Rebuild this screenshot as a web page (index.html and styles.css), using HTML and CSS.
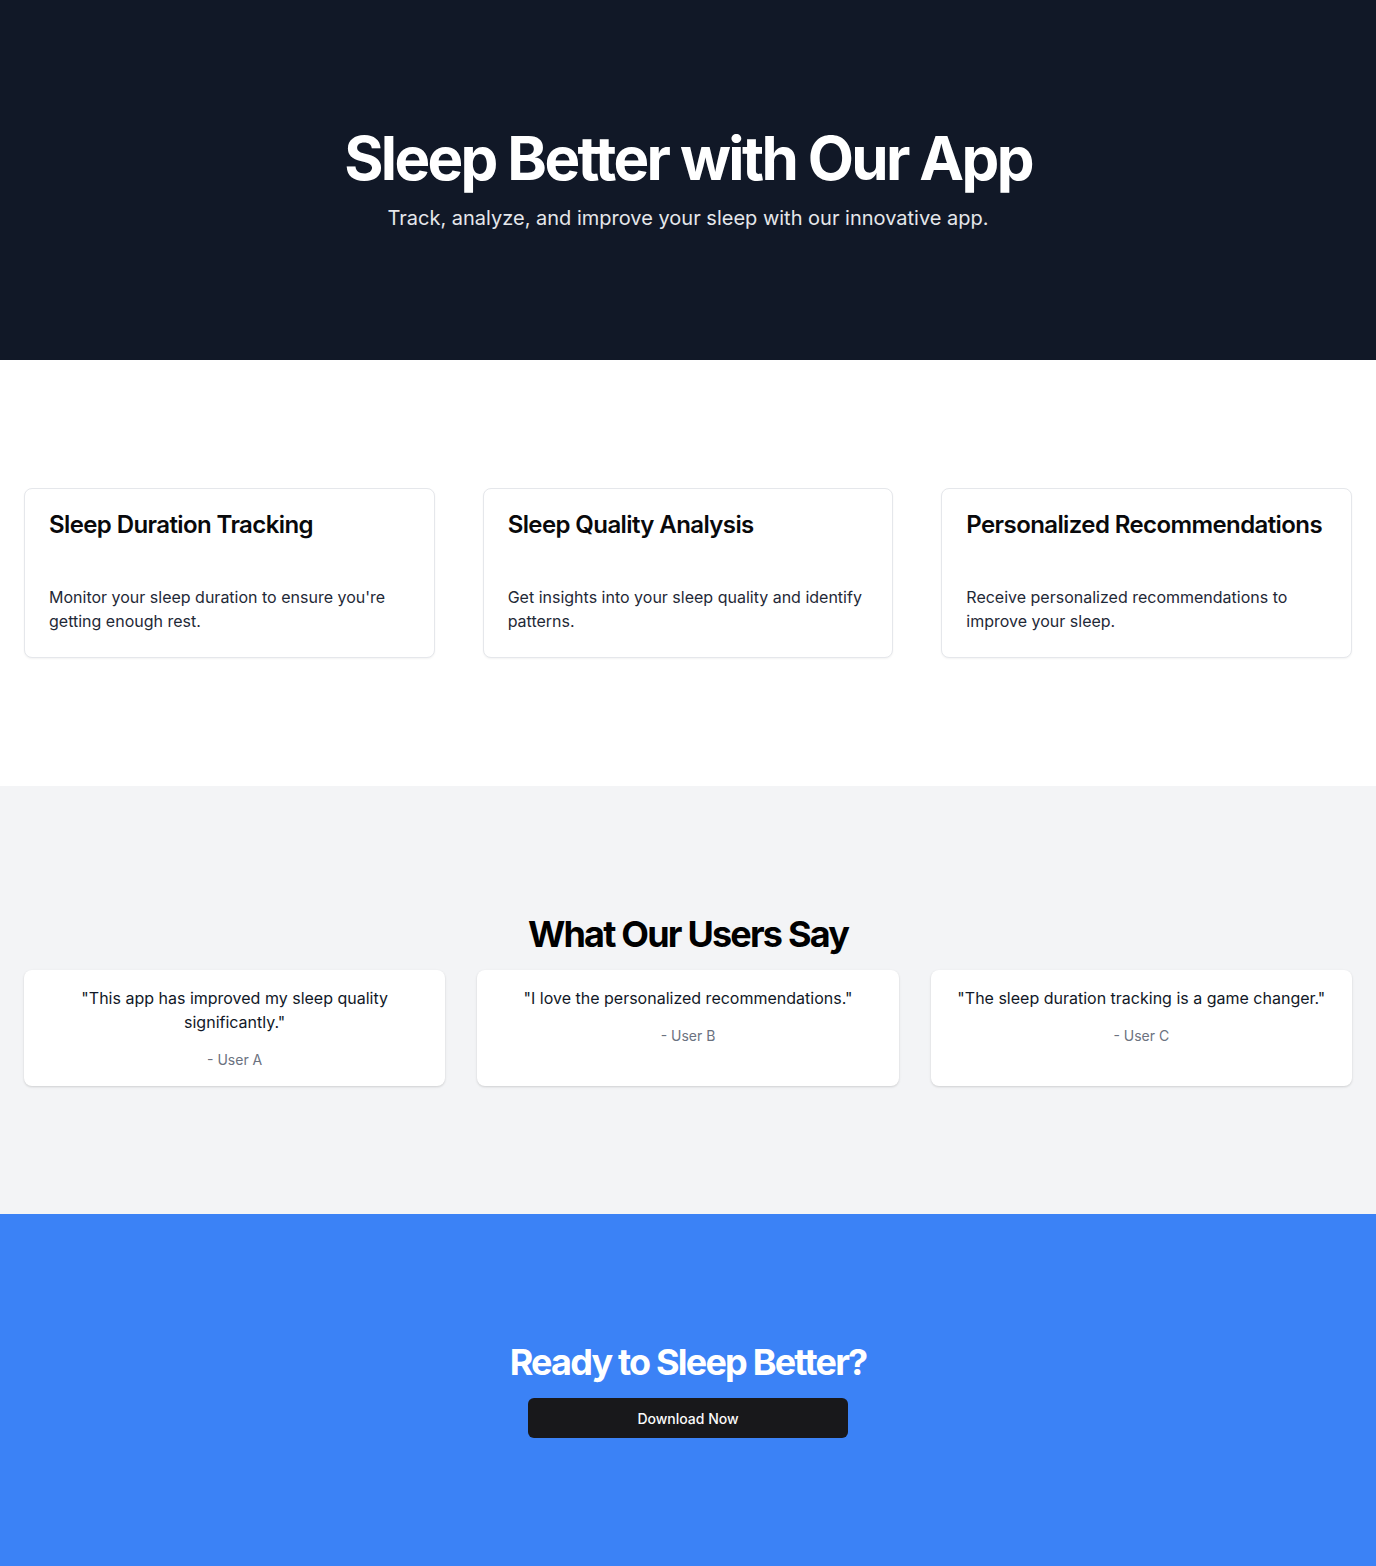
FILE: index.html
```html
<!DOCTYPE html>
<html lang="en">
<head>
<meta charset="utf-8">
<title>Sleep Better with Our App</title>
<link rel="stylesheet" href="styles.css">
</head>
<body>
  <section class="hero">
    <h1 class="hero-title">Sleep Better with Our App</h1>
    <p class="hero-sub">Track, analyze, and improve your sleep with our innovative app.</p>
  </section>

  <section class="features">
    <div class="feature-grid">
      <div class="card">
        <h3 class="card-title">Sleep Duration Tracking</h3>
        <p class="card-text">Monitor your sleep duration to ensure you're getting enough rest.</p>
      </div>
      <div class="card">
        <h3 class="card-title">Sleep Quality Analysis</h3>
        <p class="card-text">Get insights into your sleep quality and identify patterns.</p>
      </div>
      <div class="card">
        <h3 class="card-title">Personalized Recommendations</h3>
        <p class="card-text">Receive personalized recommendations to improve your sleep.</p>
      </div>
    </div>
  </section>

  <section class="testimonials">
    <h2 class="section-title">What Our Users Say</h2>
    <div class="quote-grid">
      <div class="quote">
        <p class="quote-text">"This app has improved my sleep quality significantly."</p>
        <p class="quote-author">- User A</p>
      </div>
      <div class="quote">
        <p class="quote-text">"I love the personalized recommendations."</p>
        <p class="quote-author">- User B</p>
      </div>
      <div class="quote">
        <p class="quote-text">"The sleep duration tracking is a game changer."</p>
        <p class="quote-author">- User C</p>
      </div>
    </div>
  </section>

  <section class="cta">
    <h2 class="cta-title">Ready to Sleep Better?</h2>
    <button class="cta-button">Download Now</button>
  </section>
</body>
</html>
```

FILE: styles.css
```css
* { box-sizing: border-box; }
html, body { margin: 0; padding: 0; }
body {
  font-family: Inter, "Noto Sans", "Liberation Sans", sans-serif;
  color: #111827;
  background: #ffffff;
}
h1, h2, h3, p { margin: 0; }

.hero {
  background: #111827;
  color: #ffffff;
  padding: 128px 24px;
  display: flex;
  flex-direction: column;
  align-items: center;
  text-align: center;
}
.hero-title {
  font-size: 60px;
  line-height: 60px;
  font-weight: 700;
  letter-spacing: -0.044em;
}
.hero-sub {
  margin-top: 16px;
  font-size: 20px;
  line-height: 28px;
  color: #e5e7eb;
}

.features {
  padding: 128px 24px;
  background: #ffffff;
}
.feature-grid {
  display: grid;
  grid-template-columns: repeat(3, 1fr);
  gap: 48px;
}
.card {
  border: 1px solid #e5e7eb;
  border-radius: 8px;
  box-shadow: 0 1px 2px rgba(0, 0, 0, 0.05);
  padding: 24px 24px 24px;
  background: #ffffff;
}
.card-title {
  font-size: 24px;
  line-height: 24px;
  font-weight: 600;
  letter-spacing: -0.025em;
  color: #09090b;
  white-space: nowrap;
}
.card-text {
  margin-top: 48px;
  font-size: 16px;
  line-height: 24px;
  color: #1f2937;
}

.testimonials {
  background: #f3f4f6;
  padding: 128px 24px;
  text-align: center;
}
.section-title {
  font-size: 36px;
  line-height: 40px;
  font-weight: 700;
  letter-spacing: -0.05em;
  color: #000000;
}
.quote-grid {
  margin-top: 16px;
  display: grid;
  grid-template-columns: repeat(3, 1fr);
  gap: 32px;
}
.quote {
  background: #ffffff;
  border-radius: 8px;
  box-shadow: 0 1px 3px rgba(0, 0, 0, 0.1), 0 1px 2px rgba(0, 0, 0, 0.06);
  padding: 16px 24px;
}
.quote-text {
  font-size: 16px;
  line-height: 24px;
  color: #111827;
}
.quote-author {
  margin-top: 16px;
  font-size: 14px;
  line-height: 20px;
  color: #6b7280;
}

.cta {
  background: #3b82f6;
  padding: 128px 24px;
  display: flex;
  flex-direction: column;
  align-items: center;
}
.cta-title {
  font-size: 36px;
  line-height: 40px;
  font-weight: 700;
  letter-spacing: -0.05em;
  color: #ffffff;
}
.cta-button {
  margin-top: 16px;
  width: 320px;
  height: 40px;
  border: none;
  border-radius: 6px;
  background: #18181b;
  color: #fafafa;
  font-family: Inter, "Noto Sans", sans-serif;
  font-size: 14px;
  font-weight: 500;
}
```
